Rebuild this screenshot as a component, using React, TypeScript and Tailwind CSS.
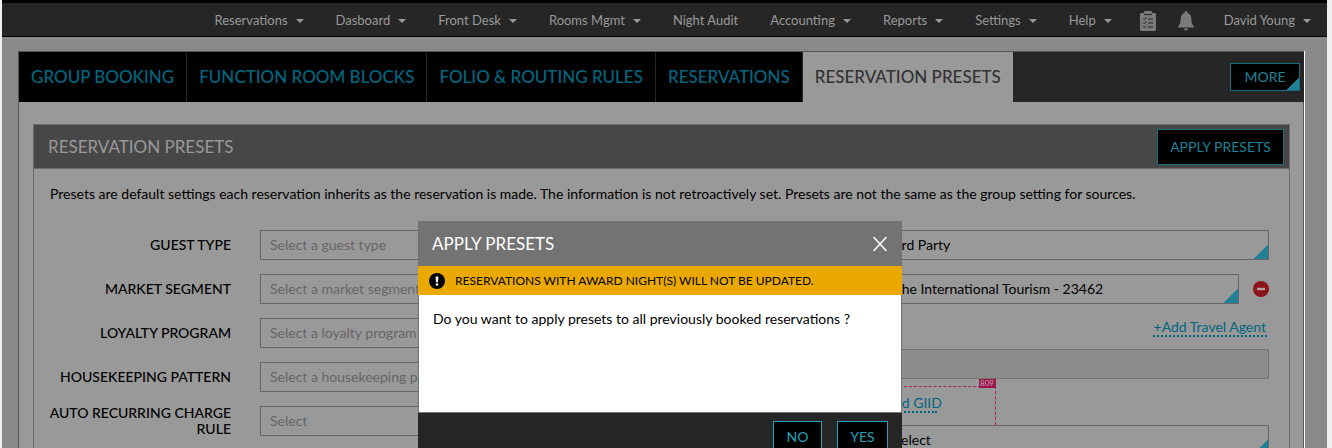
import React from 'react';

interface NavItem {
  label: string;
  menu: boolean;
}

interface SelectFieldProps {
  id: string;
  label?: string;
  value: string;
  muted?: boolean;
}

const navItems: NavItem[] = [
  { label: 'Reservations', menu: true },
  { label: 'Dasboard', menu: true },
  { label: 'Front Desk', menu: true },
  { label: 'Rooms Mgmt', menu: true },
  { label: 'Night Audit', menu: false },
  { label: 'Accounting', menu: true },
  { label: 'Reports', menu: true },
  { label: 'Settings', menu: true },
  { label: 'Help', menu: true },
];

const tabs = ['GROUP BOOKING', 'FUNCTION ROOM BLOCKS', 'FOLIO & ROUTING RULES', 'RESERVATIONS'];

const presetFields = [
  { id: 'guest-type', label: 'GUEST TYPE', placeholder: 'Select a guest type' },
  { id: 'market-segment', label: 'MARKET SEGMENT', placeholder: 'Select a market segment' },
  { id: 'loyalty-program', label: 'LOYALTY PROGRAM', placeholder: 'Select a loyalty program' },
  { id: 'housekeeping', label: 'HOUSEKEEPING PATTERN', placeholder: 'Select a housekeeping pattern' },
  { id: 'recurring-charge', label: 'AUTO RECURRING CHARGE RULE', placeholder: 'Select' },
];

const Caret: React.FC = () => (
  <svg className="w-2 h-1" viewBox="0 0 8 4" fill="#999999">
    <path d="M0 0h8L4 4z" />
  </svg>
);

const SelectField: React.FC<SelectFieldProps> = ({ id, label, value, muted }) => (
  <select
    id={id}
    aria-label={label}
    className={`block w-full min-w-0 h-[30px] px-[9px] appearance-none rounded-none border border-[#666666] text-sm bg-[#999999] bg-[linear-gradient(135deg,transparent_50%,#1f8096_50%)] bg-[length:15px_14px] bg-right-bottom bg-no-repeat ${
      muted ? 'text-[#666666]' : 'text-black'
    }`}
  >
    <option>{value}</option>
  </select>
);

const TopNav: React.FC = () => (
  <nav className="flex items-center justify-end gap-8 h-[37px] pr-4 pt-[2px] bg-[#262626] border-t-[3px] border-b border-black text-[13px] text-[#999999]">
    {navItems.map((item) => (
      <button key={item.label} type="button" className="flex items-center gap-2 whitespace-nowrap">
        {item.label}
        {item.menu && <Caret />}
      </button>
    ))}
    <div className="flex items-center gap-[22px] -ml-1 -mr-[2px]">
      <button type="button" aria-label="Tasks">
        <svg className="w-4 h-5" viewBox="0 0 16 20">
          <path fill="#7a7a7a" d="M1.5 2H4V1.2C4 .5 4.500 0 5.200 0h5.600c.7 0 1.200.5 1.200 1.200V2h2.500c.8 0 1.500.7 1.500 1.500v15c0 .8-.7 1.500-1.500 1.500h-13C.7 20 0 19.300 0 18.500v-15C0 2.700.7 2 1.500 2z" />
          <path stroke="#262626" fill="none" d="M4 3.500h8M8 8h5M8 12h5M8 16h5M3 7.500l1.200 1.200L6.500 6.500M3 11.500l1.200 1.200 2.300-2.200M3 15.500l1.200 1.200 2.300-2.200" />
        </svg>
      </button>
      <button type="button" aria-label="Notifications">
        <svg className="w-4 h-5" viewBox="0 0 16 20" fill="#7a7a7a">
          <path d="M8 0c.8 0 1.300.6 1.300 1.300v.6c2.600.6 4 2.700 4 5.300 0 4.200.8 6.300 2.700 8.300v1H0v-1c1.900-2 2.700-4.100 2.700-8.300 0-2.600 1.400-4.700 4-5.300v-.6C6.700.6 7.200 0 8 0zM6 17.500h4c0 1.200-.8 2-2 2s-2-.8-2-2z" />
        </svg>
      </button>
    </div>
    <button type="button" className="flex items-center gap-2 whitespace-nowrap">
      David Young
      <Caret />
    </button>
  </nav>
);

const TabBar: React.FC = () => (
  <div className="flex items-stretch h-[50px] bg-[#262626] text-[17px] font-medium">
    {tabs.map((tab) => (
      <button
        key={tab}
        type="button"
        className="px-3 bg-black text-[#006680] border-r border-[#262626] whitespace-nowrap"
      >
        {tab}
      </button>
    ))}
    <button type="button" className="px-3 bg-[#999999] text-[#333333] whitespace-nowrap">
      RESERVATION PRESETS
    </button>
    <div className="flex flex-1 items-center justify-end pr-1">
      <button
        type="button"
        className="w-[70px] h-7 border border-[#196b7d] bg-black bg-[linear-gradient(135deg,transparent_50%,#1f8096_50%)] bg-[length:13px_12px] bg-right-bottom bg-no-repeat text-sm font-normal text-[#1f8096]"
      >
        MORE
      </button>
    </div>
  </div>
);

const PresetForm: React.FC = () => (
  <form className="flex mt-[26px]">
    <div className="w-1/2 flex flex-col gap-[14px]">
      {presetFields.map((field) => (
        <div key={field.id} className="flex items-center h-[30px]">
          <label
            htmlFor={field.id}
            className="w-[185px] mr-[29px] shrink-0 text-right text-sm leading-4 font-medium text-black"
          >
            {field.label}
          </label>
          <SelectField id={field.id} value={field.placeholder} muted />
        </div>
      ))}
    </div>

    <div className="w-1/2 pl-[226px]">
      <SelectField id="source" label="Source" value="3rd Party" />
      <div className="flex items-center gap-[14px] mt-[14px]">
        <SelectField id="travel-agent" label="Travel agent" value="The International Tourism - 23462" />
        <button type="button" aria-label="Remove travel agent" className="shrink-0">
          <svg className="w-4 h-4" viewBox="0 0 16 16">
            <circle cx="8" cy="8" r="8" fill="#8c1318" />
            <path d="M4 8h8" stroke="#b3a0a0" strokeWidth="2.400" />
          </svg>
        </button>
      </div>
      <div className="flex justify-end h-[45px] pt-[14px] pr-[2px]">
        <a href="#travel-agent" className="h-[19px] px-px border-b-2 border-dotted border-[#006680] text-sm leading-[18px] text-[#006680]">
          +Add Travel Agent
        </a>
      </div>
      <input
        aria-label="Group code"
        disabled
        className="block w-full h-[30px] border border-[#737373] bg-[#8c8c8c]"
      />
      <div className="relative w-[112px] h-[39px] mt-[7px] pt-2 border border-b-0 border-dashed border-[#a3275a]">
        <span className="absolute -top-2 -right-px w-[17px] h-[9px] bg-[#99154a] text-center text-[8px] leading-[9px] text-[#c9a0b0]">
          809
        </span>
        <a href="#giid" className="block w-[60px] h-[18px] -ml-2 border-b-2 border-dotted border-[#006680] text-right text-sm leading-4 text-[#006680] whitespace-nowrap">
          +Add GIID
        </a>
      </div>
      <SelectField id="giid" label="GIID" value="Select" />
    </div>
  </form>
);

const ApplyPresetsDialog: React.FC = () => (
  <div className="fixed inset-0 flex items-start justify-center pt-[221px] pr-3 overflow-hidden">
    <div role="dialog" aria-labelledby="dialog-title" className="w-[484px] shrink-0 bg-white text-black">
      <div className="flex items-center justify-between h-[45px] px-[14px] bg-[#737373] text-white">
        <h2 id="dialog-title" className="text-[17px]">APPLY PRESETS</h2>
        <button type="button" aria-label="Close">
          <svg className="w-4 h-4" viewBox="0 0 16 16" stroke="white" strokeWidth="1.500">
            <path d="M1.500 1l13 14M14.500 1l-13 14" />
          </svg>
        </button>
      </div>
      <div className="flex items-center gap-[10px] h-[29px] px-[11px] bg-[#eba900] text-xs">
        <svg className="w-4 h-4" viewBox="0 0 16 16">
          <circle cx="8" cy="8" r="8" />
          <path d="M6.600 3.500h2.800L9 9.300H7z" fill="white" />
          <circle cx="8" cy="11.500" r="1.300" fill="white" />
        </svg>
        RESERVATIONS WITH AWARD NIGHT(S) WILL NOT BE UPDATED.
      </div>
      <p className="h-[118px] px-[14px] pt-[14px] border border-t-0 border-[#737373] text-sm">
        Do you want to apply presets to all previously booked reservations ?
      </p>
      <div className="flex justify-end gap-[15px] h-[60px] pt-2 pr-[14px] bg-[#262626] text-sm text-[#26a0bb]">
        <button type="button" className="w-[49px] h-[31px] border border-[#26a0bb] bg-black">NO</button>
        <button type="button" className="w-[51px] h-[31px] border border-[#26a0bb] bg-black">YES</button>
      </div>
    </div>
  </div>
);

const App: React.FC = () => {
  return (
    <div className="h-screen overflow-hidden bg-[#f0f0f0] pl-[2px] pr-[5px] font-['Lato',sans-serif]">
      <div className="min-h-screen bg-[#8a8a8a]">
        <TopNav />

        <main className="mt-[14px] ml-4 mr-[22px] border-r border-white">
          <div className="border-t border-l border-[#555555] bg-[#999999]">
            <TabBar />

            <div className="border-r border-[#555555] pl-[14px] pr-[13px] pt-[22px]">
              <section className="border border-[#6b6b6b]">
                <div className="flex items-center justify-between h-11 pl-[14px] pr-[5px] bg-[#474747] border-b border-[#6b6b6b]">
                  <h1 className="text-[17px] text-[#999999]">RESERVATION PRESETS</h1>
                  <button type="button" className="w-[127px] h-9 border border-[#196b7d] bg-black text-sm text-[#1f8096]">
                    APPLY PRESETS
                  </button>
                </div>

                <div className="pl-3 pr-5 pt-[15px] pb-5">
                  <p className="pl-1 text-sm text-black">
                    Presets are default settings each reservation inherits as the reservation is made. The information is not
                    retroactively set. Presets are not the same as the group setting for sources.
                  </p>
                  <PresetForm />
                </div>
              </section>
            </div>
          </div>
        </main>
      </div>

      <ApplyPresetsDialog />
    </div>
  );
};

export default App;
